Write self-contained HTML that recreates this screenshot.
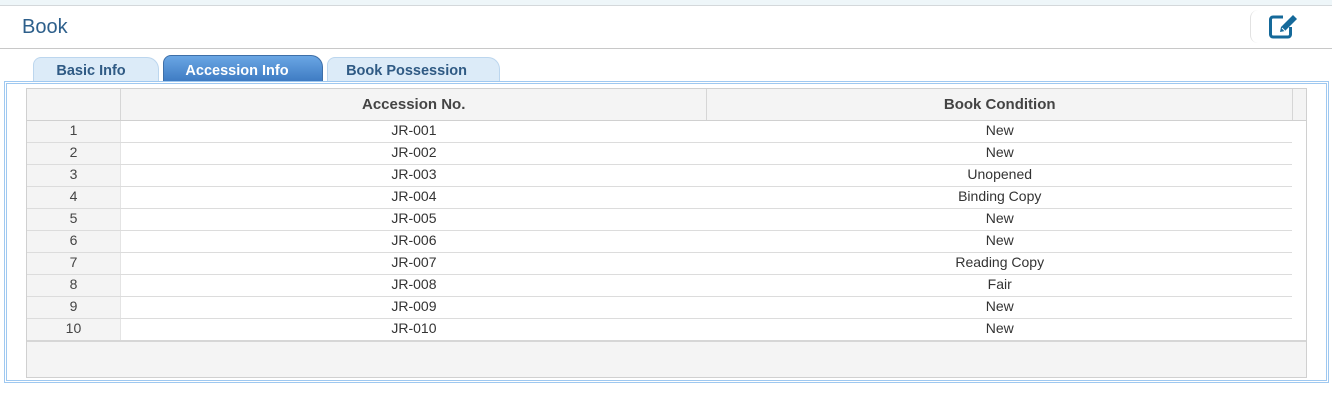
<!DOCTYPE html>
<html><head><style>
body{margin:0;width:1332px;height:412px;background:#fff;font-family:"Liberation Sans","DejaVu Sans",sans-serif;position:relative;overflow:hidden}
.abs{position:absolute}
.top{left:0;top:0;width:1332px;height:5px;background:#eef6f9;border-bottom:1px solid #d4d8db}
.hdr{left:0;top:6px;width:1332px;height:42px;border-bottom:1px solid #c8c8c8;background:#fff}
.title{left:22px;top:16px;font-size:20px;color:#2d5f8b}
.sep{left:1250px;top:10px;width:20px;height:33px;border-left:1px solid #e2e2e2;border-radius:8px 0 0 8px}
.tab{top:57px;height:24px;border:1px solid #bcd6ee;border-bottom:none;border-radius:8px 12px 0 0;background:#dcebf8;color:#2f5a84;font-weight:bold;font-size:14.5px;text-align:center;line-height:27px;box-sizing:border-box}
.tab.act{background:linear-gradient(#6aa6e4,#3f7cc3);color:#fff;border-color:#3e6fa8;top:55px;height:26px;line-height:31px}
.panel{left:4px;top:81px;width:1325px;height:302px;border:3px double #9fc8f0;box-sizing:border-box}
.grid{left:26px;top:88px;width:1281px;height:290px;border:1px solid #d0d0d0;box-sizing:border-box;background:#fff;overflow:hidden}
table{border-collapse:collapse;position:absolute;left:0;top:0;font-size:14px;color:#333}
th{height:31px;background:#f4f4f4;border-right:1px solid #d6d6d6;border-bottom:1px solid #d0d0d0;font-size:15px;color:#444;padding:0}
td{height:21px;border-bottom:1px solid #dcdcdc;text-align:center;padding:0;line-height:18px;vertical-align:top}
td.n{background:#f4f4f4;border-right:1px solid #e4e4e4;color:#444}
.foot{left:0;top:251px;width:1279px;height:36px;background:#f4f4f4;border-top:2px solid #d6d6d6}
</style></head><body>
<div class="abs top"></div>
<div class="abs hdr"></div>
<div class="abs title">Book</div>
<div class="abs sep"></div>
<svg class="abs" style="left:1266px;top:12px" width="34" height="30" viewBox="0 0 34 30">
<path d="M17 5H7a2.5 2.5 0 0 0-2.5 2.5v15A2.5 2.5 0 0 0 7 25h15a2.5 2.5 0 0 0 2.5-2.5V15" fill="none" stroke="#15699a" stroke-width="3"/>
<path d="M27 3l4 4-12 12-5 1 1-5z" fill="#15699a"/>
<path d="M16 16l3 3" stroke="#fff" stroke-width="1"/>
</svg>
<div class="abs tab" style="left:33px;width:126px;padding-right:10px">Basic Info</div>
<div class="abs tab act" style="left:163px;width:160px;padding-right:12px">Accession Info</div>
<div class="abs tab" style="left:327px;width:173px;padding-right:14px">Book Possession</div>
<div class="abs panel"></div>
<div class="abs grid">
<table>
<tr><th style="width:93px"></th><th style="width:586px">Accession No.</th><th style="width:585px">Book Condition</th><th style="width:13px;border-right:none"></th></tr>
<tr><td class="n">1</td><td>JR-001</td><td>New</td><td style="border:none"></td></tr>
<tr><td class="n">2</td><td>JR-002</td><td>New</td><td style="border:none"></td></tr>
<tr><td class="n">3</td><td>JR-003</td><td>Unopened</td><td style="border:none"></td></tr>
<tr><td class="n">4</td><td>JR-004</td><td>Binding Copy</td><td style="border:none"></td></tr>
<tr><td class="n">5</td><td>JR-005</td><td>New</td><td style="border:none"></td></tr>
<tr><td class="n">6</td><td>JR-006</td><td>New</td><td style="border:none"></td></tr>
<tr><td class="n">7</td><td>JR-007</td><td>Reading Copy</td><td style="border:none"></td></tr>
<tr><td class="n">8</td><td>JR-008</td><td>Fair</td><td style="border:none"></td></tr>
<tr><td class="n">9</td><td>JR-009</td><td>New</td><td style="border:none"></td></tr>
<tr><td class="n">10</td><td>JR-010</td><td>New</td><td style="border:none"></td></tr>
</table>
<div class="abs foot"></div>
</div>
</body></html>
